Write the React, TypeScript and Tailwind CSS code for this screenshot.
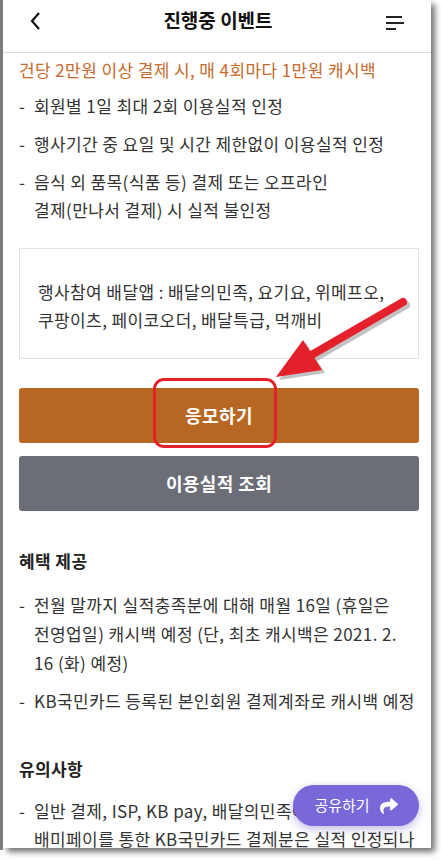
import React from 'react';
import { FaShare } from 'react-icons/fa';

const font = { fontFamily: '"Noto Sans CJK KR", "Noto Sans", sans-serif' };

const Header: React.FC = () => (
  <header className="h-[53px] border-b border-[#dcdcdc] flex items-center justify-between px-[26px] shrink-0">
    <svg width="14" height="20" viewBox="0 0 14 20" className="-mt-[10px]">
      <path d="M10 2 L3 10 L10 18" fill="none" stroke="#111" strokeWidth="2.2" />
    </svg>
    <h1 className="text-[19px] font-bold text-[#111] -mt-[12px] ml-[8px]">진행중 이벤트</h1>
    <svg width="20" height="16" viewBox="0 0 20 16" className="-mt-[6px]">
      <rect x="1" y="1" width="16" height="2" fill="#222" />
      <rect x="1" y="7" width="18" height="2" fill="#222" />
      <rect x="1" y="13" width="10" height="2" fill="#222" />
    </svg>
  </header>
);

const Item: React.FC<{ children: React.ReactNode; lh?: string }> = ({ children, lh = 'leading-[28px]' }) => (
  <div className={`flex ${lh}`}>
    <span className="w-[15px] shrink-0">-</span>
    <span>{children}</span>
  </div>
);

const App: React.FC = () => {
  return (
    <div className="w-[441px] h-[860px] bg-white overflow-hidden" style={font}>
      <div className="relative ml-[3px] w-[428px] h-[848px] bg-white overflow-hidden flex flex-col shadow-[4px_4px_6px_rgba(0,0,0,0.55)]">
        <Header />

        <div className="pl-[16px] pr-[12px] text-[17px] tracking-[0.4px] text-[#333]">
          <p className="mt-[3px] leading-[28px] text-[#c86a2c] whitespace-nowrap">건당 2만원 이상 결제 시, 매 4회마다 1만원 캐시백</p>

          <div className="mt-[8px] flex flex-col gap-[10px] whitespace-nowrap">
            <Item>회원별 1일 최대 2회 이용실적 인정</Item>
            <Item>행사기간 중 요일 및 시간 제한없이 이용실적 인정</Item>
            <Item>
              음식 외 품목(식품 등) 결제 또는 오프라인
              <br />
              결제(만나서 결제) 시 실적 불인정
            </Item>
          </div>

          <div className="mt-[24px] h-[111px] border border-[#e2e2e2] pl-[18px] pt-[29px] leading-[28px] whitespace-nowrap">
            행사참여 배달앱 : 배달의민족, 요기요, 위메프오,
            <br />
            쿠팡이츠, 페이코오더, 배달특급, 먹깨비
          </div>

          <button className="mt-[29px] w-full h-[55px] rounded-[3px] bg-[#b86722] text-white font-bold text-[18px]">
            응모하기
          </button>
          <button className="mt-[13px] w-full h-[55px] rounded-[3px] bg-[#6b6e77] text-white font-bold text-[18px]">
            이용실적 조회
          </button>

          <h2 className="mt-[36px] text-[17px] font-bold text-[#222] leading-[28px]">혜택 제공</h2>
          <div className="mt-[15px] flex flex-col gap-[10px] whitespace-nowrap">
            <Item lh="leading-[29px]">
              전월 말까지 실적충족분에 대해 매월 16일 (휴일은
              <br />
              전영업일) 캐시백 예정 (단, 최초 캐시백은 2021. 2.
              <br />
              16 (화) 예정)
            </Item>
            <Item>KB국민카드 등록된 본인회원 결제계좌로 캐시백 예정</Item>
          </div>

          <h2 className="mt-[40px] text-[17px] font-bold text-[#222] leading-[28px]">유의사항</h2>
          <div className="mt-[14px] flex flex-col whitespace-nowrap">
            <Item>
              일반 결제, ISP, KB pay, 배달의민족에서 제공하는
              <br />
              배미페이를 통한 KB국민카드 결제분은 실적 인정되나
            </Item>
          </div>
        </div>

        {/* share fab */}
        <button className="absolute left-[290px] top-[785px] w-[126px] h-[41px] rounded-full bg-[#7868d8] text-white text-[15px] flex items-center justify-center gap-[10px] shadow-[0_3px_8px_rgba(80,60,180,0.35)]">
          <span>공유하기</span>
          <FaShare className="w-[18px] h-[18px]" />
        </button>

        {/* annotation */}
        <div className="absolute left-[150px] top-[378px] w-[124px] h-[70px] rounded-[11px] border-[3px] border-[#e4202a]" />
        <svg className="absolute left-0 top-0" width="428" height="848" viewBox="0 0 428 848">
          <g transform="translate(3 3)" fill="#9a9a9a" opacity="0.6">
            <line x1="400" y1="302" x2="305" y2="357" stroke="#9a9a9a" strokeWidth="8" strokeLinecap="round" />
            <polygon points="273,377 300,340 319,370" />
          </g>
          <line x1="400" y1="302" x2="305" y2="357" stroke="#e4202a" strokeWidth="8" strokeLinecap="round" />
          <polygon points="273,377 300,340 319,370" fill="#e4202a" />
        </svg>
      </div>
      <div className="absolute left-0 top-0 w-[3px] h-[850px] bg-[#7c7c7c]" />
    </div>
  );
};

export default App;
